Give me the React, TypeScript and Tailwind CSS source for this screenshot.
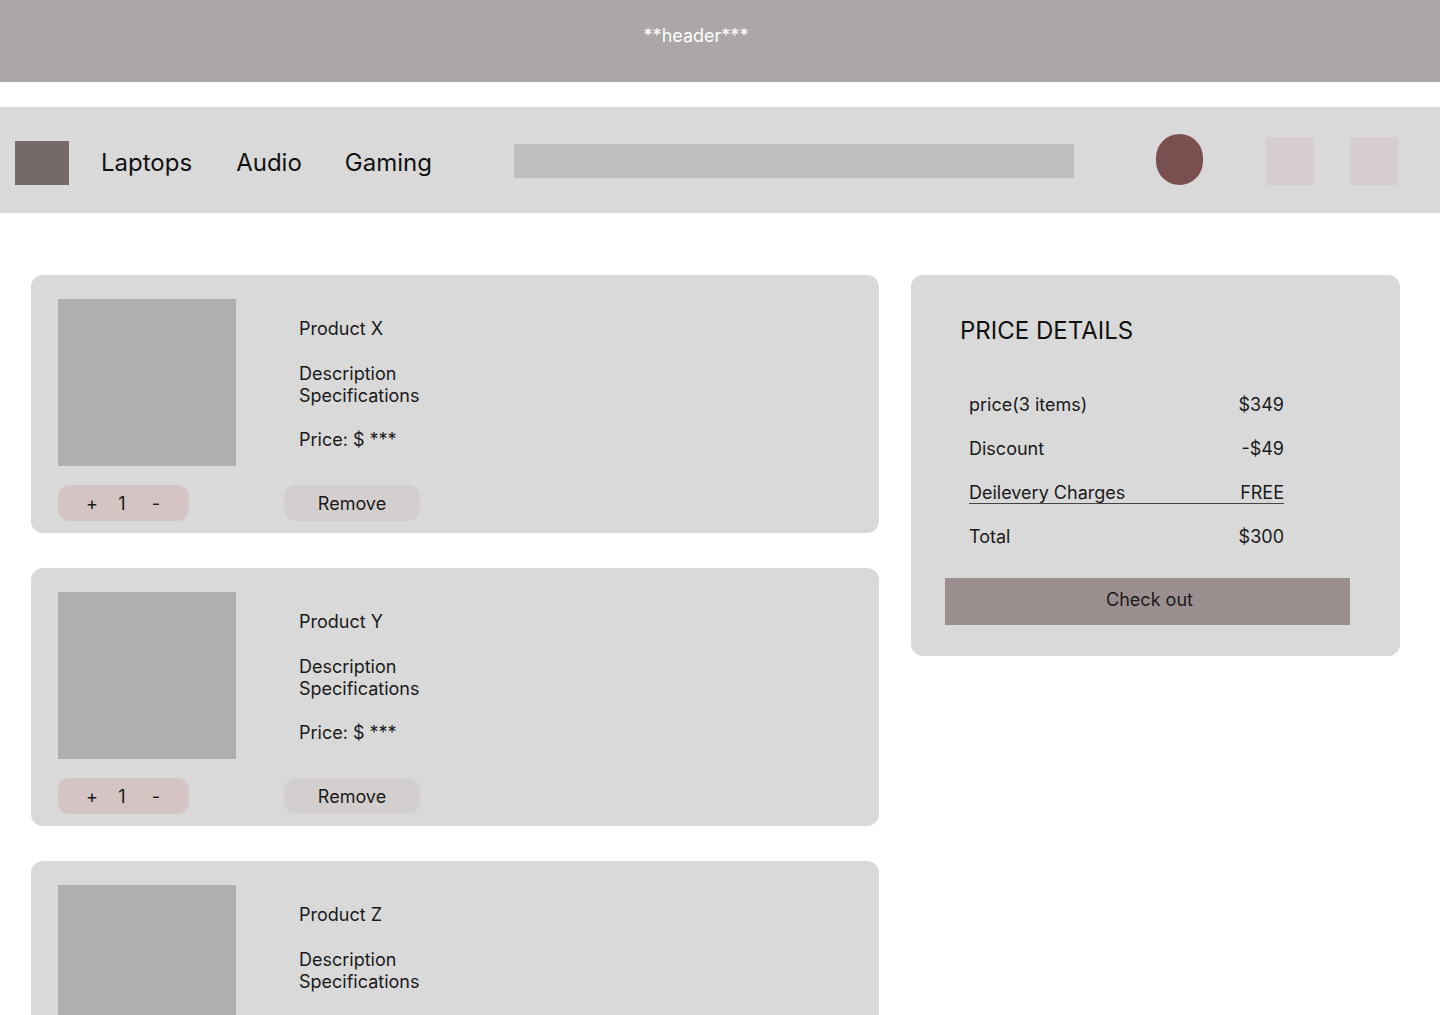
import React from "react";

const font = { fontFamily: "Inter, 'Noto Sans', sans-serif" };

function ProductCard({ name }: { name: string }) {
  return (
    <div className="w-[848px] h-[258px] shrink-0 rounded-[12px] bg-[#d9d9d9] pl-[27px] pt-[24px]">
      <div className="flex">
        <div className="w-[178px] h-[167px] bg-[#b0aeae]" />
        <div className="ml-[63px] pt-[19px] text-[18px] leading-[22px] text-[#1a1a1a]">
          <div>{name}</div>
          <div className="mt-[23px]">Description</div>
          <div>Specifications</div>
          <div className="mt-[22px]">Price: $ ***</div>
        </div>
      </div>
      <div className="flex mt-[19px]">
        <div className="w-[131px] h-[36px] rounded-[12px] bg-[#d4c4c4] flex items-center text-[18px] text-[#1a1a1a]">
          <span className="ml-[28px] w-[12px] text-center">+</span>
          <span className="ml-[19px] w-[10px] text-center">1</span>
          <span className="ml-[24px] w-[10px] text-center">-</span>
        </div>
        <div className="ml-[95px] w-[136px] h-[36px] rounded-[12px] bg-[#d4cfcf] flex items-center justify-center text-[18px] text-[#1a1a1a]">
          Remove
        </div>
      </div>
    </div>
  );
}

function Row({ label, value, underline }: { label: string; value: string; underline?: boolean }) {
  return (
    <div
      className={
        "flex justify-between w-[315px] h-[22px] text-[18px] leading-[22px] text-[#1a1a1a] " +
        (underline ? "border-b border-[#444]" : "")
      }
    >
      <span>{label}</span>
      <span>{value}</span>
    </div>
  );
}

export default function App() {
  return (
    <div style={font} className="w-[1440px] min-h-[1015px] bg-white overflow-hidden">
      <div className="h-[82px] bg-[#aca7a7] flex justify-center pt-[25px]">
        <span className="text-[18px] leading-[22px] text-white mr-[48px]">**header***</span>
      </div>
      <div className="mt-[25px] h-[106px] bg-[#d9d9d9] flex items-center pl-[15px]">
        <div className="w-[54px] h-[44px] bg-[#736a69] mt-[6px]" />
        <span className="ml-[32px] text-[24px] leading-[30px] text-[#111] mt-[6px]">Laptops</span>
        <span className="ml-[44px] text-[24px] leading-[30px] text-[#111] mt-[6px]">Audio</span>
        <span className="ml-[43px] text-[24px] leading-[30px] text-[#111] mt-[6px]">Gaming</span>
        <div className="ml-[82px] w-[560px] h-[34px] bg-[#bebebe] mt-[2px]" />
        <div className="ml-[82px] w-[47px] h-[51px] rounded-full bg-[#7a4f4f] mt-[-1px]" />
        <div className="ml-[63px] w-[48px] h-[48px] bg-[#d6cece] mt-[2px]" />
        <div className="ml-[36px] w-[48px] h-[48px] bg-[#d6cece] mt-[2px]" />
      </div>
      <div className="flex mt-[62px] pl-[31px] gap-[32px] items-start">
        <div className="flex flex-col gap-[35px]">
          <ProductCard name="Product X" />
          <ProductCard name="Product Y" />
          <ProductCard name="Product Z" />
        </div>
        <div className="w-[489px] rounded-[12px] bg-[#d9d9d9] pt-[42px] pb-[31px]">
          <div className="pl-[49px] text-[24px] leading-[28px] text-[#111]">PRICE DETAILS</div>
          <div className="pl-[58px] mt-[49px] flex flex-col gap-[22px]">
            <Row label="price(3 items)" value="$349" />
            <Row label="Discount" value="-$49" />
            <Row label="Deilevery Charges" value="FREE" underline />
            <Row label="Total" value="$300" />
          </div>
          <div className="ml-[34px] mt-[30px] w-[405px] h-[47px] bg-[#9b8e8e] flex items-center justify-center pl-[4px] pb-[4px] text-[18px] text-[#1a1a1a]">
            Check out
          </div>
        </div>
      </div>
    </div>
  );
}
